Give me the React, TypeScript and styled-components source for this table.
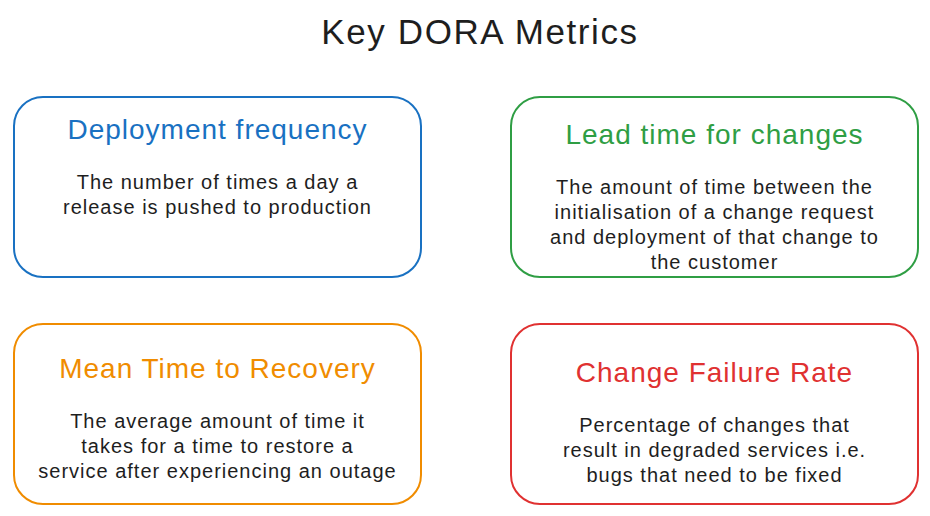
import React from 'react';
import styled, { createGlobalStyle } from 'styled-components';

const GlobalStyle = createGlobalStyle`
	html, body {
		margin: 0;
		padding: 0;
		background: #ffffff;
	}
	body {
		font-family: 'Liberation Sans', Arial, sans-serif;
		color: #1e1e1e;
	}
`;

const Page = styled.div`
	inline-size: 930px;
	block-size: 516px;
	display: flex;
	flex-direction: column;
	align-items: center;
	overflow: hidden;
`;

const Heading = styled.h1`
	margin: 12px 0 0 30px;
	font-size: 35px;
	line-height: 40px;
	font-weight: 400;
	color: #1e1e1e;
	letter-spacing: 1.6px;
`;

const Grid = styled.div`
	display: grid;
	grid-template-columns: 409px 409px;
	grid-template-rows: 182px 182px;
	column-gap: 88px;
	row-gap: 45px;
	margin-top: 44px;
	margin-left: 2px;
`;

const Card = styled.div<{ accent: string; top: number }>`
	box-sizing: border-box;
	border: 2px solid ${({ accent }) => accent};
	border-radius: 30px;
	padding-top: ${({ top }) => top}px;
	display: flex;
	flex-direction: column;
	align-items: center;
	text-align: center;
`;

const Title = styled.h2<{ accent: string }>`
	margin: 0;
	font-size: 28px;
	line-height: 32px;
	font-weight: 400;
	color: ${({ accent }) => accent};
	letter-spacing: 1px;
`;

const Body = styled.p`
	margin: 24px 0 0 0;
	font-size: 20px;
	line-height: 25px;
	color: #1e1e1e;
	letter-spacing: 1px;
	white-space: nowrap;
`;

interface Metric {
	title: string;
	lines: string[];
	accent: string;
	top: number;
}

const metrics: Metric[] = [
	{
		title: 'Deployment frequency',
		lines: ['The number of times a day a', 'release is pushed to production'],
		accent: '#1971c2',
		top: 16,
	},
	{
		title: 'Lead time for changes',
		lines: [
			'The amount of time between the',
			'initialisation of a change request',
			'and deployment of that change to',
			'the customer',
		],
		accent: '#2f9e44',
		top: 21,
	},
	{
		title: 'Mean Time to Recovery',
		lines: [
			'The average amount of time it',
			'takes for a time to restore a',
			'service after experiencing an outage',
		],
		accent: '#f08c00',
		top: 28,
	},
	{
		title: 'Change Failure Rate',
		lines: [
			'Percentage of changes that',
			'result in degraded services i.e.',
			'bugs that need to be fixed',
		],
		accent: '#e03131',
		top: 32,
	},
];

const App: React.FC = () => {
	return (
		<>
			<GlobalStyle />
			<Page>
				<Heading>Key DORA Metrics</Heading>
				<Grid>
					{metrics.map((m) => (
						<Card key={m.title} accent={m.accent} top={m.top}>
							<Title accent={m.accent}>{m.title}</Title>
							<Body>
								{m.lines.map((line, i) => (
									<React.Fragment key={i}>
										{line}
										{i < m.lines.length - 1 && <br />}
									</React.Fragment>
								))}
							</Body>
						</Card>
					))}
				</Grid>
			</Page>
		</>
	);
};

export default App;
